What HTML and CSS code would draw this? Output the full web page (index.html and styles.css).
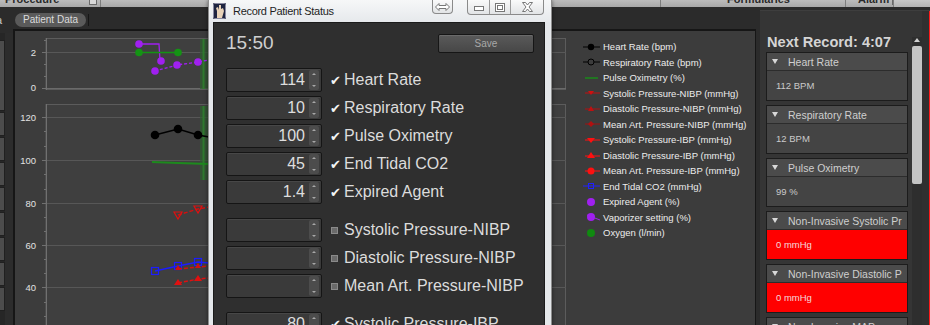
FILE: index.html
```html
<!DOCTYPE html>
<html>
<head>
<meta charset="utf-8">
<title>Record Patient Status</title>
<link rel="stylesheet" href="styles.css">
</head>
<body>
<div class="app">
  <div class="topbar">
    <div class="tb-seg tb-seg1"><span class="tb-text">Procedure</span><span class="tb-drop"></span></div>
    <div class="tb-seg tb-seg2"></div>
    <div class="tb-seg tb-seg3"><span class="tb-text">Formularies</span></div>
    <div class="tb-seg tb-seg4"><span class="tb-text">Alarm</span><span class="tb-drop"></span></div>
    <div class="tb-seg tb-seg5"></div>
  </div>

  <div class="main">
    <div class="leftcol">
      <div class="lc-label">a</div>
      <div class="lc-body">
        <div class="lc-buttons">
          <div class="lc-btn lc-btn-tall"></div>
          <div class="lc-btn"></div><div class="lc-btn"></div><div class="lc-btn"></div>
          <div class="lc-btn"></div><div class="lc-btn"></div><div class="lc-btn"></div>
          <div class="lc-btn"></div><div class="lc-btn"></div>
        </div>
        <div class="lc-gap"></div>
      </div>
    </div>

    <div class="center">
      <div class="tabrow"><span class="tab">Patient Data</span><span class="tab-sep"></span></div>
      <div class="chartpanel">
        <svg class="plots" width="551" height="294" viewBox="15 31 551 294">
          <!-- chart 1 -->
          <rect x="46" y="38.5" width="519.5" height="51" fill="#3f3f3f" stroke="#5c5c5c" stroke-width="1"/>
          <line x1="46" y1="52.5" x2="566" y2="52.5" stroke="#585858"/>
          <line x1="46" y1="88.5" x2="566" y2="88.5" stroke="#6a6a6a"/>
          <line x1="46.5" y1="38" x2="46.5" y2="90" stroke="#707070"/>
          <g stroke="#707070">
            <line x1="42" y1="52.5" x2="46" y2="52.5"/><line x1="42" y1="88.5" x2="46" y2="88.5"/>
            <line x1="44" y1="40.5" x2="46" y2="40.5"/><line x1="44" y1="64.5" x2="46" y2="64.5"/><line x1="44" y1="76.5" x2="46" y2="76.5"/>
          </g>
          <g class="axlabel">
            <text x="36" y="56" text-anchor="end">2</text>
            <text x="36" y="91" text-anchor="end">0</text>
          </g>
          <rect x="200" y="39" width="9" height="50" fill="#2f5e2f" opacity="0.7"/>
          <line x1="203.5" y1="39" x2="203.5" y2="89" stroke="#2f7a2f" stroke-width="2"/>
          <polyline points="139,44 159,44 160,61" fill="none" stroke="#a020f0" stroke-width="1.3"/>
          <circle cx="139" cy="44" r="3.8" fill="#a020f0"/>
          <circle cx="161" cy="61" r="3.8" fill="#a020f0"/>
          <line x1="139" y1="52.5" x2="178" y2="52.5" stroke="#149414" stroke-width="1.5"/>
          <circle cx="139" cy="52.5" r="3.8" fill="#149414"/>
          <circle cx="178" cy="52.5" r="3.8" fill="#149414"/>
          <polyline points="155,71 177,65 198,62 209,60" fill="none" stroke="#a020f0" stroke-width="1.3" stroke-dasharray="3 2"/>
          <circle cx="155" cy="71" r="3.8" fill="#a020f0"/>
          <circle cx="177" cy="65" r="3.8" fill="#a020f0"/>
          <circle cx="198" cy="62" r="3.8" fill="#a020f0"/>

          <!-- chart 2 -->
          <rect x="46" y="104.5" width="519.5" height="230" fill="#3f3f3f" stroke="#5c5c5c" stroke-width="1"/>
          <g stroke="#575757">
            <line x1="46" y1="117.5" x2="566" y2="117.5"/>
            <line x1="46" y1="160.5" x2="566" y2="160.5"/>
            <line x1="46" y1="203.5" x2="566" y2="203.5"/>
            <line x1="46" y1="245.5" x2="566" y2="245.5"/>
            <line x1="46" y1="287.5" x2="566" y2="287.5"/>
          </g>
          <line x1="46.5" y1="104" x2="46.5" y2="325" stroke="#707070"/>
          <g stroke="#707070">
            <line x1="42" y1="117.5" x2="46" y2="117.5"/><line x1="42" y1="160.5" x2="46" y2="160.5"/>
            <line x1="42" y1="203.5" x2="46" y2="203.5"/><line x1="42" y1="245.5" x2="46" y2="245.5"/>
            <line x1="42" y1="287.5" x2="46" y2="287.5"/>
            <line x1="44" y1="131.5" x2="46" y2="131.5"/><line x1="44" y1="146.5" x2="46" y2="146.5"/>
            <line x1="44" y1="174.5" x2="46" y2="174.5"/><line x1="44" y1="189.5" x2="46" y2="189.5"/>
            <line x1="44" y1="217.5" x2="46" y2="217.5"/><line x1="44" y1="231.5" x2="46" y2="231.5"/>
            <line x1="44" y1="259.5" x2="46" y2="259.5"/><line x1="44" y1="273.5" x2="46" y2="273.5"/>
            <line x1="44" y1="302.5" x2="46" y2="302.5"/><line x1="44" y1="316.5" x2="46" y2="316.5"/>
          </g>
          <g class="axlabel">
            <text x="36" y="121" text-anchor="end">120</text>
            <text x="36" y="164" text-anchor="end">100</text>
            <text x="36" y="207" text-anchor="end">80</text>
            <text x="36" y="249" text-anchor="end">60</text>
            <text x="36" y="291" text-anchor="end">40</text>
          </g>
          <rect x="200" y="106" width="9" height="74" fill="#2f5e2f" opacity="0.7"/>
          <line x1="203.5" y1="106" x2="203.5" y2="180" stroke="#2f7a2f" stroke-width="2"/>
          <polyline points="152,162 178,163 209,164" fill="none" stroke="#1d8a1d" stroke-width="2"/>
          <polyline points="155,135 178,129 198,135 209,137" fill="none" stroke="#000" stroke-width="1.5"/>
          <circle cx="155" cy="135" r="4.3" fill="#000"/>
          <circle cx="178" cy="129" r="4.3" fill="#000"/>
          <circle cx="198" cy="135" r="4.3" fill="#000"/>
          <polyline points="178,215 198,209 209,207" fill="none" stroke="#d01010" stroke-width="1.5" stroke-dasharray="4 2"/>
          <path d="M174,212 L182,212 L178,219 Z M194,206 L202,206 L198,213 Z" fill="none" stroke="#e01010" stroke-width="1.2"/>
          <polyline points="155,271 178,266 198,262 209,263" fill="none" stroke="#1c1cff" stroke-width="1.5"/>
          <g fill="none" stroke="#1c1cff" stroke-width="1.2">
            <rect x="151.5" y="267.5" width="7" height="7"/>
            <rect x="174.5" y="262.5" width="7" height="7"/>
            <rect x="194.5" y="258.5" width="7" height="7"/>
          </g>
          <polyline points="178,269 198,267 209,266" fill="none" stroke="#d01010" stroke-width="1.5" stroke-dasharray="4 2"/>
          <path d="M175,270 L181,270 L178,265 Z M195,268 L201,268 L198,263 Z" fill="#d01010"/>
          <polyline points="178,283 198,279 209,278" fill="none" stroke="#e01010" stroke-width="1.5" stroke-dasharray="4 2"/>
          <path d="M174,285 L182,285 L178,279 Z M194,281 L202,281 L198,275 Z" fill="#e01010"/>
        </svg>

        <ul class="legend">
          <li><svg class="mk" width="18" height="10"><line x1="0" y1="5" x2="17" y2="5" stroke="#000"/><circle cx="8" cy="5" r="3.2" fill="#000"/></svg>Heart Rate (bpm)</li>
          <li><svg class="mk" width="18" height="10"><line x1="0" y1="5" x2="17" y2="5" stroke="#000"/><circle cx="8" cy="5" r="3" fill="#3c3c3c" stroke="#000"/></svg>Respiratory Rate (bpm)</li>
          <li><svg class="mk" width="18" height="10"><line x1="2" y1="5" x2="15" y2="5" stroke="#1a8a1a" stroke-width="1.5"/></svg>Pulse Oximetry (%)</li>
          <li><svg class="mk" width="18" height="10"><line x1="2" y1="5" x2="17" y2="5" stroke="#c01010"/><path d="M5,3 L11,3 L8,7 Z" fill="#d01010"/></svg>Systolic Pressure-NIBP (mmHg)</li>
          <li><svg class="mk" width="18" height="10"><line x1="2" y1="5" x2="17" y2="5" stroke="#b01010"/><path d="M5,7 L11,7 L8,2 Z" fill="#c01010"/></svg>Diastolic Pressure-NIBP (mmHg)</li>
          <li><svg class="mk" width="18" height="10"><line x1="2" y1="5" x2="17" y2="5" stroke="#a01010"/><path d="M8,2 L11,5 L8,8 L5,5 Z" fill="#b01010"/></svg>Mean Art. Pressure-NIBP (mmHg)</li>
          <li><svg class="mk" width="18" height="10"><line x1="2" y1="5" x2="17" y2="5" stroke="#ff1010"/><path d="M4,3 L12,3 L8,8 Z" fill="#ff1010"/></svg>Systolic Pressure-IBP (mmHg)</li>
          <li><svg class="mk" width="18" height="10"><line x1="2" y1="6" x2="17" y2="6" stroke="#ff1010"/><path d="M4,8 L12,8 L8,2 Z" fill="#ff1010"/></svg>Diastolic Pressure-IBP (mmHg)</li>
          <li><svg class="mk" width="18" height="10"><line x1="2" y1="5" x2="17" y2="5" stroke="#ff1010"/><circle cx="8" cy="5" r="3.5" fill="#ff1010"/></svg>Mean Art. Pressure-IBP (mmHg)</li>
          <li><svg class="mk" width="18" height="10"><line x1="0" y1="5" x2="17" y2="5" stroke="#2020ff"/><rect x="5.5" y="2.5" width="5" height="5" fill="none" stroke="#2020ff"/></svg>End Tidal CO2 (mmHg)</li>
          <li><svg class="mk" width="18" height="10"><circle cx="8" cy="5" r="4" fill="#a020f0"/></svg>Expired Agent (%)</li>
          <li><svg class="mk" width="18" height="10"><line x1="4" y1="3" x2="17" y2="8" stroke="#a020f0"/><circle cx="8" cy="5" r="4" fill="#a020f0"/></svg>Vaporizer setting (%)</li>
          <li><svg class="mk" width="18" height="10"><circle cx="8" cy="5" r="4" fill="#108a10"/></svg>Oxygen (l/min)</li>
        </ul>
      </div>
    </div>

    <aside class="rightpanel">
      <div class="rp-content">
        <h2 class="rp-title">Next Record: 4:07</h2>
        <div class="card"><div class="card-head"><span class="tri"></span>Heart Rate</div><div class="card-body">112 BPM</div></div>
        <div class="card"><div class="card-head"><span class="tri"></span>Respiratory Rate</div><div class="card-body">12 BPM</div></div>
        <div class="card"><div class="card-head"><span class="tri"></span>Pulse Oximetry</div><div class="card-body">99 %</div></div>
        <div class="card"><div class="card-head"><span class="tri"></span>Non-Invasive Systolic Pr</div><div class="card-body alert">0 mmHg</div></div>
        <div class="card"><div class="card-head"><span class="tri"></span>Non-Invasive Diastolic P</div><div class="card-body alert">0 mmHg</div></div>
        <div class="card"><div class="card-head"><span class="tri"></span>Non-Invasive MAP</div><div class="card-body">0 mmHg</div></div>
      </div>
      <div class="scrollbar">
        <span class="sb-up"></span>
        <span class="sb-thumb"></span>
      </div>
      <div class="rp-edge"></div>
    </aside>
  </div>

  <div class="dialog">
    <div class="titlebar">
      <svg class="dlg-icon" width="13" height="16" viewBox="0 0 13 16">
        <rect x="0" y="0" width="13" height="16" rx="1" fill="#1e2440"/>
        <path d="M4,15 L4,8 L3,5 L5,4 L6,7 L6,2 L8,2 L8,6 L10,5 L11,8 L9,15 Z" fill="#e8d2b8"/>
        <rect x="0.5" y="0.5" width="12" height="15" rx="1" fill="none" stroke="#8a8aa0"/>
      </svg>
      <span class="dlg-title">Record Patient Status</span>
      <span class="tbtn tbtn-single">
        <svg width="15" height="8" viewBox="0 0 15 8"><path d="M0.5,4 L4,0.5 L4,2.5 L11,2.5 L11,0.5 L14.5,4 L11,7.5 L11,5.5 L4,5.5 L4,7.5 Z" fill="#fff" stroke="#777"/></svg>
      </span>
      <span class="tbtn-group">
        <span class="tbtn tbtn-min"><svg width="10" height="5" viewBox="0 0 10 5"><rect x="0.5" y="0.5" width="9" height="4" fill="#fff" stroke="#777"/></svg></span>
        <span class="tbtn tbtn-max"><svg width="10" height="9" viewBox="0 0 10 9"><rect x="0.5" y="0.5" width="9" height="8" fill="#fff" stroke="#777"/><rect x="2.5" y="2.5" width="5" height="4" fill="none" stroke="#777"/></svg></span>
        <span class="tbtn tbtn-close"><svg width="11" height="10" viewBox="0 0 11 10"><path d="M0.5,0.5 L3.5,0.5 L5.5,3 L7.5,0.5 L10.5,0.5 L7,5 L10.5,9.5 L7.5,9.5 L5.5,7 L3.5,9.5 L0.5,9.5 L4,5 Z" fill="#fff" stroke="#777"/></svg></span>
      </span>
    </div>
    <div class="dlg-body">
      <div class="dlg-top">
        <span class="dlg-time">15:50</span>
        <button class="save-btn" type="button">Save</button>
      </div>
      <div class="field-group">
        <div class="field"><div class="spin"><span class="spin-val">114</span><span class="spin-arrows"><span class="arr up"></span><span class="arr down"></span></span></div><span class="chk on">✔</span><span class="lbl">Heart Rate</span></div>
        <div class="field"><div class="spin"><span class="spin-val">10</span><span class="spin-arrows"><span class="arr up"></span><span class="arr down"></span></span></div><span class="chk on">✔</span><span class="lbl">Respiratory Rate</span></div>
        <div class="field"><div class="spin"><span class="spin-val">100</span><span class="spin-arrows"><span class="arr up"></span><span class="arr down"></span></span></div><span class="chk on">✔</span><span class="lbl">Pulse Oximetry</span></div>
        <div class="field"><div class="spin"><span class="spin-val">45</span><span class="spin-arrows"><span class="arr up"></span><span class="arr down"></span></span></div><span class="chk on">✔</span><span class="lbl">End Tidal CO2</span></div>
        <div class="field"><div class="spin"><span class="spin-val">1.4</span><span class="spin-arrows"><span class="arr up"></span><span class="arr down"></span></span></div><span class="chk on">✔</span><span class="lbl">Expired Agent</span></div>
      </div>
      <div class="field-group">
        <div class="field"><div class="spin"><span class="spin-val"></span><span class="spin-arrows"><span class="arr up"></span><span class="arr down"></span></span></div><span class="chk"><span class="box"></span></span><span class="lbl">Systolic Pressure-NIBP</span></div>
        <div class="field"><div class="spin"><span class="spin-val"></span><span class="spin-arrows"><span class="arr up"></span><span class="arr down"></span></span></div><span class="chk"><span class="box"></span></span><span class="lbl">Diastolic Pressure-NIBP</span></div>
        <div class="field"><div class="spin"><span class="spin-val"></span><span class="spin-arrows"><span class="arr up"></span><span class="arr down"></span></span></div><span class="chk"><span class="box"></span></span><span class="lbl">Mean Art. Pressure-NIBP</span></div>
      </div>
      <div class="field-group">
        <div class="field"><div class="spin"><span class="spin-val">80</span><span class="spin-arrows"><span class="arr up"></span><span class="arr down"></span></span></div><span class="chk on">✔</span><span class="lbl">Systolic Pressure-IBP</span></div>
      </div>
    </div>
  </div>
</div>
</body>
</html>
```

FILE: styles.css
```css
* { box-sizing: border-box; }
html, body { margin: 0; padding: 0; }
body {
  width: 930px;
  height: 325px;
  overflow: hidden;
  background: #2b2b2b;
  font-family: "Liberation Sans", Arial, sans-serif;
}
.app { position: relative; width: 930px; height: 325px; overflow: hidden; }

/* top bar */
.topbar {
  height: 7px;
  display: flex;
  background: linear-gradient(#bcbcbc, #a8a8a8);
  overflow: hidden;
}
.tb-seg { height: 7px; display: flex; align-items: flex-start; border-right: 1px solid #7e7e7e; overflow: hidden; }
.tb-seg1 { width: 101px; padding-left: 5px; }
.tb-seg2 { width: 560px; }
.tb-seg3 { width: 185px; padding-left: 66px; }
.tb-seg4 { width: 48px; padding-left: 12px; }
.tb-seg5 { flex: 1; border-right: 0; background: linear-gradient(#c8c8c8, #b4b4b4); }
.tb-text { font-size: 11px; line-height: 11px; margin-top: -6px; color: #2a2a2a; font-weight: bold; white-space: nowrap; }
.tb-drop { width: 8px; height: 5px; margin-left: auto; margin-right: 3px; border: 1px solid #6a6a6a; border-top: 0; background: #d8d8d8; }
.tb-seg4 .tb-drop { margin-left: 3px; margin-right: 0; }

/* main */
.main { display: flex; height: 318px; }
.leftcol { width: 13px; display: flex; flex-direction: column; }
.lc-label { height: 26px; padding-top: 8px; margin-left: -4px; font-size: 11px; color: #c8c8c8; line-height: 11px; }
.lc-body { flex: 1; display: flex; }
.lc-buttons { width: 5px; display: flex; flex-direction: column; gap: 1px; padding-top: 7px; background: #262626; }
.lc-btn { height: 24px; background: #4c4c4c; border: 1px solid #202020; border-left: 0; }
.lc-btn-tall { height: 71px; }
.lc-gap { flex: 1; background: #2c2c2c; }

.center { width: 743px; display: flex; flex-direction: column; }
.tabrow { height: 22px; display: flex; align-items: flex-start; padding-top: 6px; padding-left: 2px; }
.tab {
  height: 14px;
  padding: 0 8px;
  border-radius: 7px;
  background: #5a5a5a;
  color: #dcdcdc;
  font-size: 10px;
  line-height: 14px;
}
.tab-sep { width: 1px; height: 12px; margin-left: 2px; margin-top: 1px; background: #161616; }

.chartpanel {
  flex: 1;
  display: flex;
  background: #3c3c3c;
  border-left: 2px solid #161616;
  border-top: 2px solid #161616;
  border-right: 1px solid #161616;
}
.plots { display: block; flex: none; }
.axlabel text { font-family: "Liberation Sans", Arial, sans-serif; font-size: 9.5px; fill: #e2e2e2; }

.legend {
  list-style: none;
  margin: 0;
  padding: 8px 0 0 17px;
  flex: 1;
}
.legend li {
  display: flex;
  align-items: center;
  height: 15.5px;
  font-size: 9.5px;
  color: #ececec;
  white-space: nowrap;
}
.mk { flex: none; margin-right: 2px; }

/* right panel */
.rightpanel {
  margin-left: 4px;
  margin-top: 3px;
  flex: 1;
  display: flex;
  background: #353535;
  border-top: 1px solid #3e3e3e;
}
.rp-content { width: 150px; padding-left: 6px; padding-top: 23px; }
.rp-title {
  margin: 0 0 2px 1px;
  font-size: 14.6px;
  line-height: 16px;
  font-weight: bold;
  color: #d4d4d4;
  white-space: nowrap;
}
.card {
  width: 142px;
  border: 1px solid #1c1c1c;
  margin-bottom: 4px;
}
.card-head {
  height: 18px;
  display: flex;
  align-items: center;
  padding-left: 5px;
  background: #4b4b4b;
  border-bottom: 1px solid #2c2c2c;
  color: #cfcfcf;
  font-size: 10.5px;
  white-space: nowrap;
  overflow: hidden;
}
.tri {
  width: 0; height: 0;
  border-left: 3px solid transparent;
  border-right: 3px solid transparent;
  border-top: 5px solid #d8d8d8;
  margin-right: 10px;
}
.card-body {
  height: 29px;
  display: flex;
  align-items: center;
  padding-left: 9px;
  background: #444;
  color: #cacaca;
  font-size: 9.5px;
}
.card-body.alert { background: #ff0000; color: #f4dada; }

.scrollbar {
  width: 10px;
  margin-left: 2px;
  margin-top: 26px;
  display: flex;
  flex-direction: column;
  align-items: center;
  background: #2e2e2e;
}
.sb-up {
  width: 0; height: 0;
  border-left: 3px solid transparent;
  border-right: 3px solid transparent;
  border-bottom: 4px solid #d0d0d0;
  margin-top: 1px;
}
.sb-thumb { width: 10px; height: 138px; margin-top: 4px; background: #c4c4c4; border-radius: 2px; }
.rp-edge { flex: 1; border-right: 1px solid #ff1a1a; background: #303030; }

/* dialog */
.dialog {
  position: absolute;
  left: 208px;
  top: 0;
  width: 344px;
  height: 350px;
  display: flex;
  flex-direction: column;
  background: linear-gradient(90deg, #e4e7ea, #eef0f2 50%, #e4e7ea);
  border-left: 1px solid #8d8d8d;
  border-right: 1px solid #8d8d8d;
  box-shadow: 0 0 4px rgba(0,0,0,0.5);
}
.titlebar {
  height: 22px;
  display: flex;
  align-items: flex-start;
  background: linear-gradient(#f6f7f8, #e6e9ec);
}
.dlg-icon { margin: 3px 0 0 4px; flex: none; }
.dlg-title {
  margin: 4px 0 0 7px;
  font-size: 11px;
  letter-spacing: -0.3px;
  line-height: 14px;
  color: #1e1e1e;
  white-space: nowrap;
}
.tbtn { display: flex; align-items: center; justify-content: center; height: 14px; }
.tbtn-single {
  margin-left: auto;
  width: 21px;
  border: 1px solid #8a8a8a;
  border-top: 0;
  border-radius: 0 0 4px 4px;
  background: linear-gradient(#fafafa, #e2e4e6);
}
.tbtn-group {
  margin-left: 14px;
  margin-right: 7px;
  display: flex;
  border: 1px solid #8a8a8a;
  border-top: 0;
  border-radius: 0 0 4px 4px;
  background: linear-gradient(#fafafa, #e2e4e6);
  overflow: hidden;
}
.tbtn-min { width: 22px; border-right: 1px solid #9a9a9a; align-items: flex-end; padding-bottom: 3px; }
.tbtn-max { width: 21px; border-right: 1px solid #9a9a9a; }
.tbtn-close { width: 32px; }

.dlg-body {
  flex: 1;
  margin: 0 6px 0 4px;
  background: #2f2f2f;
  border: 1px solid #1b1b1b;
  padding: 10px 0 0 12px;
}
.dlg-top { display: flex; align-items: center; height: 20px; }
.dlg-time { font-size: 19px; color: #cfcfcf; line-height: 20px; }
.save-btn {
  margin-left: auto;
  margin-right: 10px;
  width: 96px;
  height: 19px;
  padding: 0;
  border: 1px solid #161616;
  border-radius: 2px;
  background: linear-gradient(#5a5a5a, #474747);
  box-shadow: inset 0 1px 0 #6a6a6a;
  color: #a8a8a8;
  font-family: "Liberation Sans", Arial, sans-serif;
  font-size: 10px;
}
.field-group { display: flex; flex-direction: column; gap: 4px; margin-top: 15px; }
.field-group + .field-group { margin-top: 14px; }
.field { display: flex; align-items: center; height: 24px; }
.spin {
  width: 96px;
  height: 24px;
  display: flex;
  align-items: center;
  border: 1px solid #151515;
  border-radius: 2px;
  background: #3a3a3a;
  box-shadow: inset 0 1px 0 #474747;
}
.spin-val {
  flex: 1;
  text-align: right;
  padding-right: 4px;
  font-size: 16px;
  color: #dedede;
}
.spin-arrows {
  width: 10px;
  height: 20px;
  margin-right: 2px;
  display: flex;
  flex-direction: column;
  justify-content: space-between;
  align-items: center;
  background: #4c4c4c;
  border-radius: 2px;
  padding: 3px 0;
}
.arr { width: 0; height: 0; border-left: 2px solid transparent; border-right: 2px solid transparent; }
.arr.up { border-bottom: 2px solid #a8a8a8; }
.arr.down { border-top: 2px solid #a8a8a8; }
.chk {
  width: 14px;
  margin-left: 8px;
  display: flex;
  align-items: center;
  font-family: "DejaVu Sans", sans-serif;
  font-size: 13px;
  color: #f4f4f4;
  line-height: 13px;
}
.box { width: 7px; height: 7px; margin-left: 1px; background: #6a6a6a; border: 1px solid #8a8a8a; }
.lbl { font-size: 16px; color: #dcdcdc; white-space: nowrap; }
```
